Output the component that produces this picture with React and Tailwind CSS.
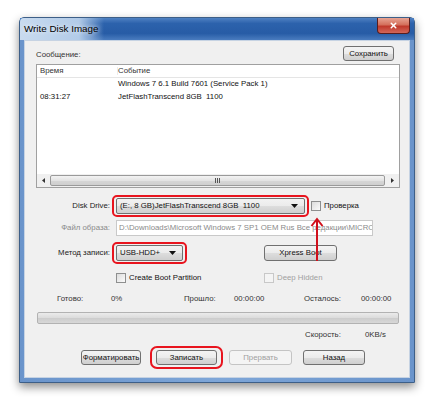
import { X } from "lucide-react";

const font = "font-['Liberation_Sans',Arial,sans-serif]";

function Btn({ children, className = "", disabled = false }) {
  return (
    <div
      className={`flex h-[15px] items-center justify-center whitespace-nowrap rounded-[3px] border text-[7.8px] leading-none ${
        disabled
          ? "border-[#c4c4c4] bg-[#f4f4f4] text-[#a0a0a0]"
          : "border-[#707070] bg-[linear-gradient(#f4f4f4_0%,#ebebeb_50%,#dddddd_51%,#cfcfcf_100%)] text-[#111]"
      } ${className}`}
    >
      {children}
    </div>
  );
}

function Check({ label, disabled = false }) {
  return (
    <div className="flex items-center gap-[3px]">
      <div
        className={`h-[10px] w-[10px] border ${
          disabled
            ? "border-[#c8c8c8] bg-[#f4f4f4]"
            : "border-[#8e8f8f] bg-[linear-gradient(135deg,#dcdcdc,#fbfbfb)]"
        }`}
      />
      <span className={`text-[7.8px] leading-none ${disabled ? "text-[#a0a0a0]" : "text-[#111]"}`}>
        {label}
      </span>
    </div>
  );
}

function Combo({ text, className = "" }) {
  return (
    <div
      className={`flex h-[16px] items-center justify-between rounded-[2px] border border-[#707070] bg-[linear-gradient(#f2f2f2_0%,#ebebeb_50%,#dddddd_51%,#cfcfcf_100%)] pl-[3px] pr-[6px] text-[7.8px] leading-none text-[#111] ${className}`}
    >
      <span className="whitespace-pre">{text}</span>
      <svg width="7" height="4" viewBox="0 0 7 4">
        <path d="M0 0h7L3.5 4z" fill="#111" />
      </svg>
    </div>
  );
}

export default function App() {
  return (
    <div className={`h-[403px] w-[434px] overflow-hidden bg-white pl-[19px] pt-[17px] ${font}`}>
      {/* window */}
      <div className="relative h-[366px] w-[396px] rounded-t-[5px] border border-[#3d5f88] bg-[linear-gradient(90deg,#6a94cb,#7ea6d8_50%,#6a94cb)] shadow-[0_4px_10px_rgba(0,0,0,0.45)]">
        {/* title bar */}
        <div className="relative flex h-[22px] items-center bg-[linear-gradient(#4f81c2_0%,#2c62ac_25%,#275ca6_70%,#4a7cbf_100%)] pl-[4px]">
          <div className="absolute left-0 top-0 h-full w-[84px] rounded-tl-[4px] bg-[linear-gradient(90deg,#c9dbef,#b2cbe8_70%,rgba(178,203,232,0))]" />
          <span className="relative text-[9.8px] text-black [text-shadow:0_0_5px_white]">Write Disk Image</span>
          <div className="absolute right-[4px] top-0 flex h-[16px] w-[33px] items-center justify-center rounded-b-[4px] border border-t-0 border-[#5a1d1d] bg-[linear-gradient(#e8a493_0%,#d4705c_45%,#c0392b_55%,#d2675a_100%)]">
            <X className="h-[9px] w-[9px] text-white" strokeWidth={4} />
          </div>
        </div>

        {/* client */}
        <div className="mx-[4px] h-[338px] border border-[#c6d3e3] bg-[#f0f0f0] pl-[11px] pr-[9px] text-[7.8px] leading-none text-[#111]">
          <div className="flex h-[23px] items-end justify-between pb-[3px]">
            <span className="pb-[2px] text-[#333]">Сообщение:</span>
            <Btn className="mr-[6px] w-[51px]">Сохранить</Btn>
          </div>

          {/* list */}
          <div className="flex h-[124px] flex-col border border-[#a0a0a0] bg-white">
            <div className="flex h-[13px] items-center border-b border-[#e5e5e5] text-[#333]">
              <span className="w-[81px] border-r border-[#ececec] pl-[3px]">Время</span>
              <span>Событие</span>
            </div>
            <div className="flex h-[12px] items-center">
              <span className="w-[81px] pl-[3px]" />
              <span>Windows 7 6.1 Build 7601 (Service Pack 1)</span>
            </div>
            <div className="flex h-[13px] items-center">
              <span className="w-[81px] pl-[3px]">08:31:27</span>
              <span className="whitespace-pre">JetFlashTranscend 8GB  1100</span>
            </div>
            <div className="flex-1" />
            <div className="flex h-[13px] items-center bg-[#f0f0f0]">
              <div className="flex w-[13px] items-center justify-center">
                <svg width="3" height="5" viewBox="0 0 3 5">
                  <path d="M3 0v5L0 2.5z" fill="#333" />
                </svg>
              </div>
              <div className="flex h-[11px] flex-1 items-center justify-center rounded-[2px] border border-[#9a9a9a] bg-[linear-gradient(#f3f3f3,#e3e3e3_50%,#d6d6d6_51%,#cfcfcf)]">
                <div className="flex gap-[1px]">
                  <div className="h-[5px] w-[1px] bg-[#555]" />
                  <div className="h-[5px] w-[1px] bg-[#555]" />
                  <div className="h-[5px] w-[1px] bg-[#555]" />
                </div>
              </div>
              <div className="flex w-[14px] items-center justify-center">
                <svg width="3" height="5" viewBox="0 0 3 5">
                  <path d="M0 0v5L3 2.5z" fill="#333" />
                </svg>
              </div>
            </div>
          </div>

          {/* disk drive */}
          <div className="mt-[10px] flex h-[16px] items-center">
            <span className="w-[74px] text-right text-[#222]">Disk Drive:</span>
            <div className="relative ml-[6px]">
              <Combo text="(E:, 8 GB)JetFlashTranscend 8GB  1100" className="w-[189px]" />
              <div className="absolute -inset-x-[4px] -bottom-[3px] -top-[3px] rounded-[5px] border-2 border-[#e8141e]" />
            </div>
            <div className="ml-[6px]">
              <Check label="Проверка" />
            </div>
          </div>

          {/* image file */}
          <div className="mt-[6px] flex h-[16px] items-center">
            <span className="w-[74px] text-right text-[#8a8a8a]">Файл образа:</span>
            <div className="ml-[6px] flex h-[16px] w-[257px] items-center overflow-hidden whitespace-nowrap border border-[#c9c9c9] bg-white pl-[2px] text-[#8a8a8a]">
              D:\Downloads\Microsoft Windows 7 SP1 OEM Rus Все редакции\MICRO
            </div>
          </div>

          {/* write method */}
          <div className="mt-[9px] flex h-[16px] items-center">
            <span className="w-[74px] text-right text-[#222]">Метод записи:</span>
            <div className="relative ml-[6px]">
              <Combo text="USB-HDD+" className="w-[67px]" />
              <div className="absolute -inset-x-[4px] -bottom-[3px] -top-[3px] rounded-[5px] border-2 border-[#e8141e]" />
            </div>
            <Btn className="ml-[81px] h-[16px] w-[73px]">Xpress Boot</Btn>
          </div>

          {/* checkboxes */}
          <div className="mt-[12px] flex h-[10px] items-center pl-[80px]">
            <div className="w-[148px]">
              <Check label="Create Boot Partition" />
            </div>
            <Check label="Deep Hidden" disabled />
          </div>

          {/* stats */}
          <div className="mt-[10px] flex h-[12px] items-center pl-[21px] text-[#333]">
            <span className="w-[54px]">Готово:</span>
            <span className="w-[73px]">0%</span>
            <span className="w-[50px]">Прошло:</span>
            <span className="w-[70px]">00:00:00</span>
            <span className="w-[57px]">Осталось:</span>
            <span>00:00:00</span>
          </div>

          {/* progress */}
          <div className="ml-[1px] mt-[7px] h-[12px] w-[362px] rounded-[2px] border border-[#b2b2b2] bg-[linear-gradient(#ebebeb,#dbdbdb_50%,#cccccc_51%,#d8d8d8)]" />

          {/* speed */}
          <div className="mt-[5px] flex h-[12px] items-center pl-[269px] text-[#333]">
            <span className="w-[60px]">Скорость:</span>
            <span>0KB/s</span>
          </div>

          {/* buttons */}
          <div className="mt-[9px] flex items-center pl-[45px]">
            <Btn className="w-[60px]">Форматировать</Btn>
            <div className="relative ml-[15px]">
              <Btn className="w-[61px]">Записать</Btn>
              <div className="absolute -inset-x-[6px] -bottom-[4px] -top-[4px] rounded-[7px] border-2 border-[#e8141e]" />
            </div>
            <Btn className="ml-[12px] w-[63px]" disabled>
              Прервать
            </Btn>
            <Btn className="ml-[11px] w-[62px]">Назад</Btn>
          </div>
        </div>

        {/* annotation arrow */}
        <svg
          className="pointer-events-none absolute left-[290px] top-[198px]"
          width="14"
          height="46"
          viewBox="0 0 14 46"
        >
          <path d="M7 45V4" stroke="#d0101c" strokeWidth="2" />
          <path d="M1.5 10L7 3l5.5 7" stroke="#d0101c" strokeWidth="2" fill="none" />
        </svg>
      </div>
    </div>
  );
}
